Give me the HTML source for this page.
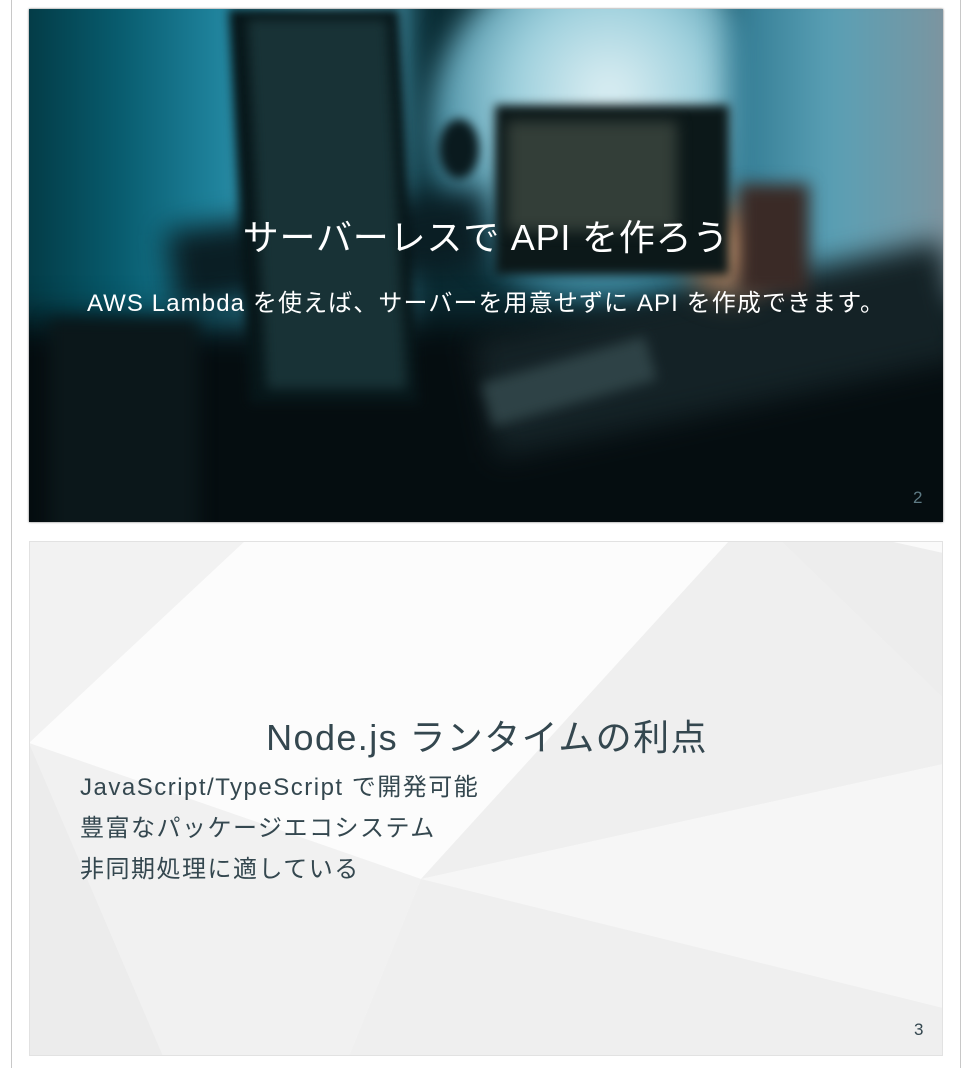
<!DOCTYPE html>
<html><head><meta charset="utf-8"><style>
*{margin:0;padding:0;box-sizing:border-box}
html,body{width:972px;height:1068px;background:#fff;overflow:hidden;font-family:"Liberation Sans","Noto Sans CJK JP",sans-serif}
.vl{position:absolute;top:0;width:1px;height:1068px;background:#c8c8c8}
.slide{position:absolute;left:29px;width:914px;overflow:hidden}
#s1{top:9px;height:513px;background:#0a2c34;box-shadow:0 0 2px #666}
#s2{top:541px;height:515px;background:#f9f9f9;border:1px solid #e2e2e2}
.b{position:absolute;filter:blur(14px)}
.t1{position:absolute;left:0;width:914px;text-align:center;color:#fff;white-space:nowrap}
</style></head><body>
<div class="vl" style="left:11px"></div>
<div class="vl" style="left:960px"></div>

<div class="slide" id="s1">
  <div class="b" style="left:-40px;top:-40px;width:420px;height:420px;background:linear-gradient(90deg,#022e36 0%,#075a6c 30%,#1f849e 55%,#5aa8bc 80%,#3d8aa0 100%)"></div>
  <div class="b" style="left:400px;top:-60px;width:360px;height:360px;border-radius:50%;background:radial-gradient(circle at 50% 40%,#dff0f4 0%,#9ccfdc 35%,#347f96 70%,rgba(30,100,120,0) 100%)"></div>
  <div class="b" style="left:700px;top:-30px;width:260px;height:330px;background:linear-gradient(90deg,#2f7890,#5aa0b5 40%,#7896a2 80%,#9a8890)"></div>
  <div class="b" style="left:140px;top:200px;width:320px;height:80px;background:#0a1e24;transform:rotate(-8deg)"></div>
  <div class="b" style="left:-40px;top:310px;width:1000px;height:260px;background:#050d10;filter:blur(18px)"></div>
  <div class="b" style="left:450px;top:280px;width:480px;height:120px;background:#142226;transform:rotate(-12deg)"></div>
  <div class="b" style="left:650px;top:190px;width:100px;height:100px;border-radius:50%;background:radial-gradient(circle,#e0b890 0%,#a07050 45%,rgba(80,50,40,0) 100%)"></div>
  <div class="b" style="left:710px;top:175px;width:70px;height:110px;background:#3a2a26;filter:blur(8px)"></div>
  <div class="b" style="left:20px;top:310px;width:150px;height:230px;background:#0b171a;filter:blur(8px)"></div>
  <div class="b" style="left:210px;top:0px;width:170px;height:395px;background:#061518;transform:skewX(3deg);filter:blur(5px)"></div>
  <div class="b" style="left:228px;top:10px;width:140px;height:370px;background:#183236;transform:skewX(3deg);filter:blur(6px)"></div>
  <div class="b" style="left:466px;top:96px;width:234px;height:170px;background:#0c1819;filter:blur(5px)"></div>
  <div class="b" style="left:478px;top:112px;width:170px;height:110px;background:#333e38;filter:blur(7px)"></div>
  <div class="b" style="left:455px;top:350px;width:170px;height:45px;background:#2e4246;transform:rotate(-16deg);filter:blur(6px)"></div>
  <div class="b" style="left:410px;top:110px;width:40px;height:60px;border-radius:50%;background:#0a1a1e;filter:blur(5px)"></div>
  <div class="t1" style="top:205px;font-size:36px;line-height:48px;letter-spacing:0.8px">サーバーレスで API を作ろう</div>
  <div class="t1" style="top:280px;font-size:24px;line-height:30px;letter-spacing:1.1px">AWS Lambda を使えば、サーバーを用意せずに API を作成できます。</div>
  <div style="position:absolute;left:884px;top:479px;font-size:17px;color:#5e7a84">2</div>
</div>

<div class="slide" id="s2">
  <svg width="914" height="515" style="position:absolute;left:-1px;top:-1px">
    <rect width="914" height="515" fill="#f7f7f7"/>
    <polygon points="0,0 216,0 0,202" fill="#f2f2f2"/>
    <polygon points="216,0 700,0 392,338 0,202" fill="#fcfcfc"/>
    <polygon points="700,0 752,0 914,157 914,223 392,338" fill="#efefef"/>
    <polygon points="752,0 914,0 914,157" fill="#ededed"/>
    <polygon points="860,0 914,0 914,12" fill="#fafafa"/>
    <polygon points="392,338 914,223 914,467" fill="#f6f6f6"/>
    <polygon points="392,338 914,467 914,515 320,515" fill="#efefef"/>
    <polygon points="0,202 392,338 320,515 134,515" fill="#f1f1f1"/>
    <polygon points="0,202 134,515 0,515" fill="#ececec"/>
  </svg>
  <div style="position:absolute;left:0;width:914px;top:172px;text-align:center;font-size:36px;line-height:48px;letter-spacing:1.4px;color:#34474f;white-space:nowrap">Node.js ランタイムの利点</div>
  <div style="position:absolute;left:50px;top:225px;font-size:24px;line-height:41px;letter-spacing:1.5px;color:#34474f;white-space:nowrap">JavaScript/TypeScript で開発可能<br>豊富なパッケージエコシステム<br>非同期処理に適している</div>
  <div style="position:absolute;left:884px;top:478px;font-size:17px;color:#34474f">3</div>
</div>
</body></html>
